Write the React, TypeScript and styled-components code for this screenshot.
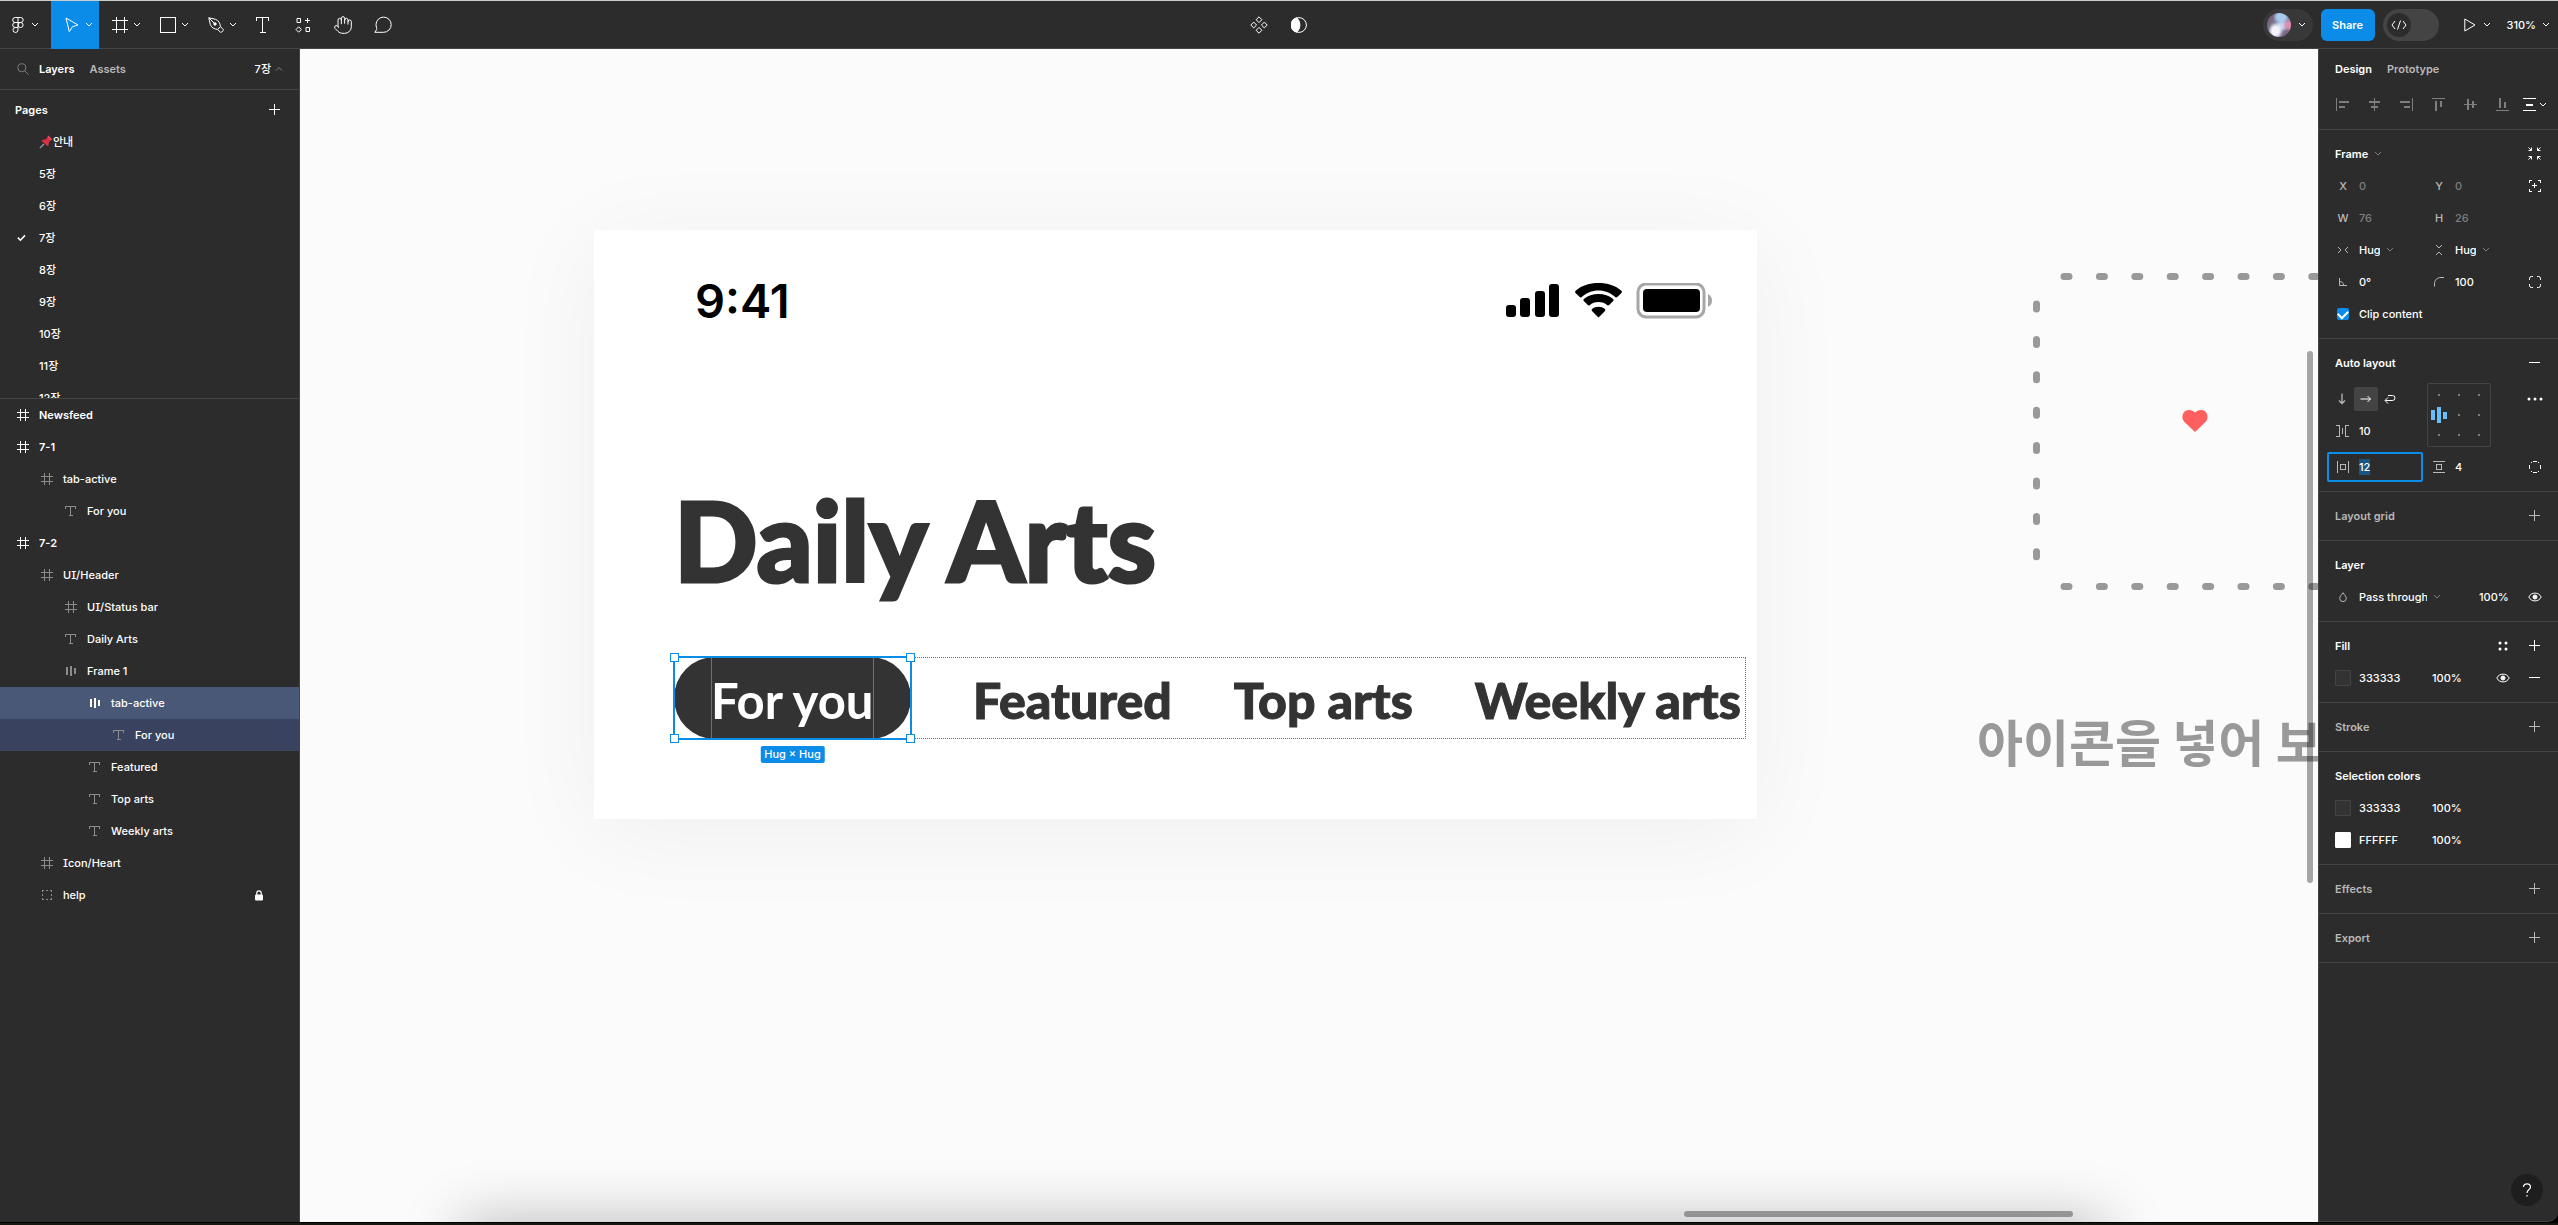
import React, { useEffect, useRef } from "react";
import styled, { createGlobalStyle, css } from "styled-components";
import { Hand } from "lucide-react";

const color = {
  panel: "#2c2c2c",
  line: "#444444",
  blue: "#0c8ce9",
  text: "#ffffff",
  soft: "#b8b8b8",
  faint: "#7e7e7e",
  canvas: "#fbfbfb",
  ink: "#333333",
};

const ui = `Inter, "Noto Sans CJK KR", sans-serif`;

const GlobalStyle = createGlobalStyle`
  * { box-sizing: border-box; }
  body { margin: 0; background: #000; color: ${color.text}; font: 500 11px/16px ${ui}; font-feature-settings: "cv08"; overflow: hidden; }
  button, input, select { font: inherit; font-feature-settings: inherit; color: inherit; background: none; border: 0; padding: 0; margin: 0; outline: none; }
  ul, h1, h2, p { margin: 0; padding: 0; list-style: none; font: inherit; }
  svg { display: block; flex: none; fill: none; stroke: currentColor; }
  ::selection { background: #1a5684; color: #fff; }
`;

/* ---------- icons ---------- */

type IconProps = { w: number; h: number; crisp?: boolean; children: React.ReactNode };
const Icon = ({ w, h, crisp, children }: IconProps) => (
  <svg width={w} height={h} viewBox={`0 0 ${w} ${h}`} shapeRendering={crisp ? "crispEdges" : undefined} aria-hidden>
    {children}
  </svg>
);

const Chevron = ({ up }: { up?: boolean }) => (
  <Icon w={8} h={6}>
    <path d={up ? "M1 4.5L4 1.5L7 4.5" : "M1 1L4 4L7 1"} />
  </Icon>
);
const FigmaMark = () => (
  <Icon w={12} h={16}>
    <path d="M6 .5H3.2a2.5 2.5 0 0 0 0 5H6M6 5.5H3.2a2.5 2.5 0 0 0 0 5H6M6 10.5H3.2A2.5 2.5 0 1 0 6 13V.5H8.7a2.5 2.5 0 0 1 0 5H6" />
    <circle cx="8.6" cy="8" r="2.5" />
  </Icon>
);
const MoveIcon = () => (
  <Icon w={14} h={16}>
    <path d="M1 1L13 8L7.5 9.7L4.3 14.6Z" />
  </Icon>
);
const FrameTool = () => (
  <Icon w={16} h={16} crisp>
    <path d="M4.5 0V16M12.5 0V16M0 3.5H16M0 12.5H16" />
  </Icon>
);
const RectTool = () => (
  <Icon w={16} h={16} crisp>
    <rect x=".5" y=".5" width="15" height="15" />
  </Icon>
);
const PenTool = () => (
  <Icon w={16} h={16}>
    <path d="M.8 .8L7.500 2.300C10.800 3.400 12.300 6.600 12.400 9.700L9.700 12.400C6.600 12.300 3.400 10.800 2.300 7.500ZM.8 .8L6.200 6.200M12.500 9.700L15.300 12.500L15.100 13.700L13.700 15.100L12.500 15.300L9.700 12.500" />
    <circle cx="7" cy="7" r="1.2" fill="currentColor" />
  </Icon>
);
const TextTool = () => (
  <Icon w={14} h={16} crisp>
    <path d="M.5 4V.5H12.5V4M6.5 0V15.5M3.5 15.5H10" />
  </Icon>
);
const ResourcesIcon = () => (
  <Icon w={16} h={16}>
    <path d="M2 1.5H5.5V5.5H2ZM12.5 1V6M10 3.5H15M11 10.5H14.5V14.5H11ZM3.7 9.8L6.4 12.5L3.7 15.2L1 12.5Z" />
  </Icon>
);
const CommentIcon = () => (
  <Icon w={18} h={18}>
    <path d="M.8 16.3H9.6A7.6 7.6 0 1 0 2 8.7C2 10.300 3 12.100 2.600 13.600Z" />
  </Icon>
);
const ComponentsIcon = () => (
  <Icon w={18} h={18}>
    <path d="M9 .8L11.9 3.7L9 6.6L6.1 3.7ZM9 11.4L11.9 14.3L9 17.2L6.1 14.3ZM3.7 6.1L6.6 9L3.7 11.9L.8 9ZM14.3 6.1L17.2 9L14.3 11.9L11.4 9Z" />
  </Icon>
);
const ContrastIcon = () => (
  <Icon w={16} h={16}>
    <circle cx="8" cy="8" r="7.4" />
    <path d="M5.5.8A7.5 7.5 0 0 0 5.5 15.2C10 12 10 4 5.5.8Z" fill="currentColor" />
  </Icon>
);
const CodeIcon = () => (
  <Icon w={16} h={10}>
    <path d="M4 1L1 5L4 9M12 1L15 5L12 9M9.5 .5L6.5 9.5" />
  </Icon>
);
const PlayIcon = () => (
  <Icon w={12} h={14}>
    <path d="M.8 1V13L11 7Z" />
  </Icon>
);
const SearchIcon = () => (
  <Icon w={12} h={12}>
    <circle cx="4.8" cy="4.8" r="4" />
    <path d="M7.8 7.8L11.6 11.6" />
  </Icon>
);
const PlusIcon = () => (
  <Icon w={12} h={12} crisp>
    <path d="M5.5 0V11M0 5.5H11" />
  </Icon>
);
const MinusIcon = () => (
  <Icon w={12} h={12} crisp>
    <path d="M0 5.5H11" />
  </Icon>
);
const CheckIcon = () => (
  <Icon w={10} h={8}>
    <path d="M.8 3.6L3.4 6.2L8 1.4" strokeWidth="1.6" />
  </Icon>
);
const PinIcon = () => (
  <Icon w={14} h={14}>
    <path d="M5 9L.8 13.2" stroke="#8fa3ad" strokeWidth="1.2" />
    <path d="M9.2.6L13.2 4.4L11.8 5.2L9.8 7.6L9.6 10.6L8.6 11.2L2.6 5.8L3.4 4.8L6.4 4.4L8.6 2.2Z" fill="#dd2e44" stroke="none" />
    <path d="M9.2.6L13.2 4.4L12 5L8.6 2Z" fill="#f4505f" stroke="none" />
  </Icon>
);
const glyphs: Record<string, React.ReactNode> = {
  frame: (
    <Icon w={12} h={12} crisp>
      <path d="M3.5 0V12M8.5 0V12M0 3.5H12M0 8.5H12" />
    </Icon>
  ),
  text: (
    <Icon w={12} h={12} crisp>
      <path d="M.5 4V1.5H10.5V4M5.5 1V10.5M3.5 10.5H8" />
    </Icon>
  ),
  auto: (
    <Icon w={12} h={12} crisp>
      <path d="M2 2V10M6 1V11M10 3V9" strokeWidth="2" />
    </Icon>
  ),
  group: (
    <Icon w={12} h={12} crisp>
      <path d="M1.5 3V1.5H3M5 1.5H7M9 1.5H10.5V3M10.5 5V7M10.5 9V10.5H9M7 10.5H5M3 10.5H1.5V9M1.5 7V5" />
    </Icon>
  ),
};
const LockIcon = () => (
  <Icon w={8} h={11}>
    <rect x="0" y="4.5" width="8" height="6" rx="1" fill="currentColor" stroke="none" />
    <path d="M1.8 5V3a2.2 2.2 0 0 1 4.4 0V5" strokeWidth="1.2" />
  </Icon>
);
const EyeIcon = () => (
  <Icon w={14} h={10}>
    <path d="M.8 5C3.2-.2 10.8-.2 13.2 5C10.8 10.2 3.2 10.2.8 5Z" />
    <circle cx="7" cy="5" r="2" fill="currentColor" />
  </Icon>
);
const alignShapes = [
  { edge: "M.5 0V13", bars: "M3 4H13M3 9H9" },
  { edge: "M6.5 0V13", bars: "M1 4H12M3 9H10" },
  { edge: "M12.5 0V13", bars: "M0 4H10M4 9H10" },
  { edge: "M0 .5H13", bars: "M4 3V13M9 3V9" },
  { edge: "M0 6.5H13", bars: "M4 1V12M9 3V10" },
  { edge: "M0 12.5H13", bars: "M4 0V10M9 4V10" },
];
const alignNames = ["left", "horizontal centers", "right", "top", "vertical centers", "bottom"];

/* ---------- shell ---------- */

const Shell = styled.div`
  display: flex;
  flex-direction: column;
  height: 100vh;
  border-top: 1px solid #c9cecd;
  border-bottom: 2px solid #17180f;
  background: #000;
  padding-bottom: 1px;
`;
const Toolbar = styled.header`
  display: grid;
  grid-template-columns: 1fr auto 1fr;
  height: 48px;
  flex: none;
  background: ${color.panel};
  box-shadow: inset 0 -1px ${color.line};
`;
const Group = styled.div<{ $end?: boolean }>`
  display: flex;
  align-items: center;
  justify-content: ${(p) => (p.$end ? "flex-end" : "flex-start")};
`;
const Tool = styled.button<{ $active?: boolean }>`
  width: 40px;
  height: 48px;
  display: flex;
  align-items: center;
  justify-content: center;
  background: ${(p) => (p.$active ? color.blue : "transparent")};
`;
const MenuTool = styled(Tool)<{ $wide?: boolean }>`
  width: ${(p) => (p.$wide ? 51 : 48)}px;
  justify-content: flex-start;
  gap: 5px;
  padding-left: ${(p) => (p.$wide ? 10 : 13)}px;
`;
const ToolMark = styled.span`
  display: grid;
  place-items: center;
  width: 16px;
`;
const Account = styled.button`
  display: flex;
  align-items: center;
  gap: 7px;
  width: 50px;
  height: 32px;
  padding: 0 4px;
  border-radius: 16px;
  background: #383838;
`;
const Avatar = styled.span`
  width: 24px;
  height: 24px;
  border-radius: 50%;
  background:
    radial-gradient(ellipse at 36% 74%, #f4f3fa 0 16%, transparent 34%),
    radial-gradient(circle at 58% 16%, #a9c9ee 0 16%, transparent 32%),
    radial-gradient(circle at 92% 50%, #dd8fae 0 10%, transparent 26%),
    radial-gradient(circle at 62% 52%, #c9d3ec 0 12%, transparent 34%),
    linear-gradient(120deg, #75657a 20%, #8ea0c4 52%, #7d6480 80%);
`;
const Share = styled.button`
  width: 54px;
  height: 32px;
  margin: 0 8px;
  border-radius: 6px;
  background: ${color.blue};
  font-weight: 600;
`;
const DevToggle = styled.button`
  display: flex;
  align-items: center;
  width: 56px;
  height: 32px;
  padding: 0 4px;
  border-radius: 16px;
  background: ${color.line};
`;
const Knob = styled.span`
  display: grid;
  place-items: center;
  width: 24px;
  height: 24px;
  border-radius: 50%;
  background: ${color.panel};
`;
const Menu = styled.button`
  display: flex;
  align-items: center;
  gap: 7px;
  height: 48px;
`;
const Present = styled(Menu)`
  margin: 0 16px 0 25px;
`;
const Zoom = styled(Menu)`
  gap: 6px;
  margin-right: 8px;
`;
const Body = styled.div`
  display: flex;
  flex: 1;
  min-height: 0;
`;

/* ---------- left panel ---------- */

const Left = styled.aside`
  width: 300px;
  flex: none;
  background: ${color.panel};
  border-right: 1px solid ${color.line};
`;
const PanelHead = styled.div`
  display: flex;
  align-items: center;
  height: 41px;
  padding: 0 16px 0 17px;
  border-bottom: 1px solid ${color.line};
`;
const SearchButton = styled.button`
  width: 22px;
  color: ${color.faint};
`;
const Tab = styled.button<{ $on?: boolean }>`
  margin-right: 15px;
  font-weight: 600;
  color: ${(p) => (p.$on ? color.text : color.soft)};
`;
const PageMenu = styled.button`
  display: flex;
  align-items: center;
  gap: 4px;
  margin-left: auto;
  svg { color: ${color.faint}; }
`;
const Pages = styled.section`
  height: 309px;
  overflow: hidden;
  border-bottom: 1px solid ${color.line};
`;
const PagesHead = styled.div`
  display: flex;
  align-items: center;
  justify-content: space-between;
  height: 36px;
  padding: 4px 18px 0 15px;
  font-weight: 600;
`;
const PageRow = styled.li`
  display: flex;
  align-items: center;
  height: 32px;
`;
const CheckCell = styled.span`
  width: 39px;
  padding-left: 17px;
`;
const LayerRow = styled.li<{ $depth: number; $strong?: boolean; $tone?: "selected" | "child" }>`
  display: flex;
  align-items: center;
  gap: 10px;
  height: 32px;
  padding-right: 36px;
  padding-left: ${(p) => 17 + p.$depth * 24}px;
  font-weight: ${(p) => (p.$strong ? 600 : 500)};
  ${(p) => p.$tone === "selected" && css`background: #4a5878;`}
  ${(p) => p.$tone === "child" && css`background: #394360;`}
`;
const Glyph = styled.span<{ $bright?: boolean }>`
  color: ${(p) => (p.$bright ? color.text : "#8c8c8c")};
`;
const RowEnd = styled.span`
  margin-left: auto;
`;

/* ---------- canvas ---------- */

const Canvas = styled.main`
  position: relative;
  flex: 1;
  min-width: 0;
  overflow: hidden;
  background: ${color.canvas};
`;
const Artboard = styled.article`
  position: absolute;
  left: 294px;
  top: 181px;
  width: 1163px;
  padding: 46px 0 80px 80px;
  background: #fff;
  color: ${color.ink};
  box-shadow: 0 12px 93px rgba(0, 0, 0, 0.05);
  font-family: Lato, sans-serif;
`;
const StatusBar = styled.div`
  display: flex;
  align-items: center;
  justify-content: space-between;
  height: 50px;
  padding: 0 43px 0 21px;
  color: #000;
`;
const Clock = styled.time`
  font: 600 47px/50px Inter, sans-serif;
`;
const Title = styled.h1`
  margin-top: 148px;
  font-size: 110px;
  line-height: 130px;
  font-weight: 900;
  -webkit-text-stroke: 3px ${color.ink};
`;
const TabStrip = styled.div`
  display: flex;
  align-items: center;
  width: 1072px;
  height: 82px;
  margin-top: 53px;
  outline: 1px dotted ${color.blue};
  outline-offset: -1px;
`;
const CanvasTab = styled.p`
  margin-left: 62px;
  padding-top: 3px;
  font-size: 50px;
  line-height: 58px;
  font-weight: 900;
  -webkit-text-stroke: 1px ${color.ink};
  white-space: nowrap;
`;
const Selection = styled.div`
  position: relative;
  width: 237px;
  height: 82px;
  outline: 2px solid ${color.blue};
  outline-offset: -1px;
`;
const Pill = styled.p`
  height: 82px;
  padding: 14px 37px 10px;
  border-radius: 41px;
  background: ${color.ink};
  color: #fff;
  font-size: 49px;
  line-height: 58px;
  font-weight: 700;
  white-space: nowrap;
`;
const TextBounds = styled.span`
  position: absolute;
  inset: 0 37px;
  border: solid ${color.blue};
  border-width: 0 1px;
`;
const Handle = styled.span<{ $x: "left" | "right"; $y: "top" | "bottom" }>`
  position: absolute;
  ${(p) => p.$x}: -4px;
  ${(p) => p.$y}: -4px;
  width: 9px;
  height: 9px;
  border: 1px solid ${color.blue};
  background: #fff;
`;
const SizeTag = styled.span`
  position: absolute;
  top: 89px;
  left: 50%;
  transform: translateX(-50%);
  padding: 0 4px;
  border-radius: 2px;
  background: ${color.blue};
  color: #fff;
  font: 500 11px/17px ${ui};
  white-space: nowrap;
`;
const HelpFrame = styled.div`
  position: absolute;
  left: 1733px;
  top: 224px;
`;
const HelpText = styled.p`
  position: absolute;
  left: 1677px;
  top: 654px;
  color: #999;
  font: 700 50px/74px "Noto Sans CJK KR", sans-serif;
  white-space: nowrap;
`;
const ScrollThumb = styled.div<{ $vertical?: boolean }>`
  position: absolute;
  border-radius: 3px;
  background: rgba(0, 0, 0, 0.34);
  ${(p) =>
    p.$vertical
      ? css`right: 5px; top: 302px; width: 6px; height: 532px;`
      : css`right: 245px; bottom: 5px; width: 389px; height: 6px;`}
`;
const DockShadow = styled.div`
  position: absolute;
  left: 162px;
  right: 212px;
  top: 100%;
  height: 60px;
  box-shadow: 0 0 60px rgba(0, 0, 0, 0.28);
`;

/* ---------- right panel ---------- */

const Right = styled.aside`
  position: relative;
  width: 240px;
  flex: none;
  background: ${color.panel};
  border-left: 1px solid ${color.line};
  border-bottom: 1px solid ${color.line};
  border-bottom-right-radius: 10px;
`;
const ModeTabs = styled.nav`
  display: flex;
  align-items: center;
  height: 40px;
  padding-left: 16px;
`;
const AlignBar = styled.div`
  display: flex;
  height: 41px;
  padding: 0 7px 8px 8px;
  border-bottom: 1px solid ${color.line};
  color: ${color.faint};
`;
const Square = styled.button<{ $soft?: boolean; $bright?: boolean }>`
  display: flex;
  align-items: center;
  justify-content: center;
  gap: 2px;
  width: 32px;
  height: 32px;
  flex: none;
  color: ${(p) => (p.$soft ? color.soft : p.$bright ? color.text : "inherit")};
`;
const Section = styled.section`
  padding: 8px 7px 8px 8px;
  border-bottom: 1px solid ${color.line};
`;
const SectionHead = styled.div<{ $soft?: boolean }>`
  display: flex;
  align-items: center;
  height: 32px;
  padding-left: 8px;
  color: ${(p) => (p.$soft ? color.soft : color.text)};
`;
const SectionTitle = styled.h2`
  display: flex;
  align-items: center;
  gap: 6px;
  margin-right: auto;
  font-weight: 600;
  svg { color: ${color.faint}; }
`;
const Grid = styled.div`
  display: grid;
  grid-template-columns: 96px 96px 32px;
  align-items: center;
`;
const Row = styled.div`
  display: flex;
  align-items: center;
  height: 32px;
`;
const Spacer = styled.span<{ $w?: number }>`
  flex: ${(p) => (p.$w ? "none" : 1)};
  width: ${(p) => p.$w || 0}px;
`;
const Field = styled.label<{ $muted?: boolean }>`
  display: grid;
  grid-template-columns: 32px 1fr;
  align-items: center;
  height: 32px;
  color: ${(p) => (p.$muted ? color.faint : color.text)};
`;
const FieldMark = styled.span`
  display: grid;
  place-items: center;
  color: ${color.soft};
`;
const FocusField = styled(Field)`
  height: 30px;
  border-radius: 2px;
  box-shadow: inset 0 0 0 2px ${color.blue};
`;
const Value = styled.input<{ $w?: number }>`
  width: ${(p) => (p.$w ? p.$w + "px" : "100%")};
  min-width: 0;
  height: 16px;
`;
const Pick = styled.span`
  display: flex;
  align-items: center;
  gap: 6px;
  svg { color: ${color.faint}; }
`;
const Select = styled.select<{ $w: number }>`
  width: ${(p) => p.$w}px;
  height: 16px;
  appearance: none;
`;
const ClipLabel = styled.label`
  display: flex;
  align-items: center;
  height: 32px;
  padding-left: 10px;
  gap: 10px;
`;
const Tick = styled.input`
  appearance: none;
  display: grid;
  place-items: center;
  width: 12px;
  height: 12px;
  border-radius: 2px;
  background: ${color.blue};
  &::after {
    content: "";
    width: 8px;
    height: 5px;
    margin-bottom: 2px;
    border: solid #fff;
    border-width: 0 0 2px 2px;
    transform: rotate(-45deg);
  }
`;
const LayoutArea = styled.div`
  display: grid;
  grid-template-columns: 100px 92px 32px;
  align-items: start;
  padding: 4px 0;
`;
const Directions = styled.div`
  display: flex;
  align-items: center;
  height: 32px;
  padding-left: 3px;
`;
const Direction = styled.button<{ $on?: boolean; $soft?: boolean }>`
  display: grid;
  place-items: center;
  width: 24px;
  height: 24px;
  border-radius: 2px;
  background: ${(p) => (p.$on ? color.line : "transparent")};
  color: ${(p) => (p.$soft ? color.soft : color.text)};
`;
const AlignPad = styled.div`
  width: 64px;
  height: 64px;
  border: 1px solid ${color.line};
  border-radius: 2px;
`;
const Swatch = styled.button<{ $fill: string }>`
  width: 16px;
  height: 16px;
  margin: 0 8px;
  border: 1px solid ${(p) => (p.$fill === "#333333" ? "#444" : p.$fill)};
  background: ${(p) => p.$fill};
  border-radius: 1px;
`;
const Help = styled.button`
  position: absolute;
  right: 15px;
  bottom: 15px;
  width: 32px;
  height: 32px;
  border-radius: 50%;
  background: #1e1e1e;
  display: grid;
  place-items: center;
`;

const pages = ["안내", "5장", "6장", "7장", "8장", "9장", "10장", "11장", "12장"];

type Layer = { name: string; kind: string; depth: number; tone?: "selected" | "child"; locked?: boolean };
const layers: Layer[] = [
  { name: "Newsfeed", kind: "frame", depth: 0 },
  { name: "7-1", kind: "frame", depth: 0 },
  { name: "tab-active", kind: "frame", depth: 1 },
  { name: "For you", kind: "text", depth: 2 },
  { name: "7-2", kind: "frame", depth: 0 },
  { name: "UI/Header", kind: "frame", depth: 1 },
  { name: "UI/Status bar", kind: "frame", depth: 2 },
  { name: "Daily Arts", kind: "text", depth: 2 },
  { name: "Frame 1", kind: "auto", depth: 2 },
  { name: "tab-active", kind: "auto", depth: 3, tone: "selected" },
  { name: "For you", kind: "text", depth: 4, tone: "child" },
  { name: "Featured", kind: "text", depth: 3 },
  { name: "Top arts", kind: "text", depth: 3 },
  { name: "Weekly arts", kind: "text", depth: 3 },
  { name: "Icon/Heart", kind: "frame", depth: 1 },
  { name: "help", kind: "group", depth: 1, locked: true },
];

const menuTools = [
  { name: "Main menu", mark: <FigmaMark />, wide: true },
  { name: "Move", mark: <MoveIcon />, active: true },
  { name: "Frame", mark: <FrameTool /> },
  { name: "Rectangle", mark: <RectTool /> },
  { name: "Pen", mark: <PenTool /> },
];

const TopBar = () => (
  <Toolbar>
    <Group>
      {menuTools.map((tool) => (
        <MenuTool key={tool.name} $wide={tool.wide} $active={tool.active} aria-label={tool.name}>
          <ToolMark>{tool.mark}</ToolMark>
          <Chevron />
        </MenuTool>
      ))}
      <Tool aria-label="Text"><TextTool /></Tool>
      <Tool aria-label="Resources"><ResourcesIcon /></Tool>
      <Tool aria-label="Hand tool"><Hand size={20} strokeWidth={1.2} /></Tool>
      <Tool aria-label="Comment"><CommentIcon /></Tool>
    </Group>
    <Group>
      <Tool aria-label="Create component"><ComponentsIcon /></Tool>
      <Tool aria-label="Use as mask"><ContrastIcon /></Tool>
    </Group>
    <Group $end>
      <Account aria-label="Account"><Avatar /><Chevron /></Account>
      <Share>Share</Share>
      <DevToggle role="switch" aria-checked="false" aria-label="Dev mode"><Knob><CodeIcon /></Knob></DevToggle>
      <Present aria-label="Present"><PlayIcon /><Chevron /></Present>
      <Zoom>310%<Chevron /></Zoom>
    </Group>
  </Toolbar>
);

const LeftPanel = () => (
  <Left>
    <PanelHead>
      <SearchButton aria-label="Search"><SearchIcon /></SearchButton>
      <Tab $on>Layers</Tab>
      <Tab>Assets</Tab>
      <PageMenu>7장<Chevron up /></PageMenu>
    </PanelHead>
    <Pages>
      <PagesHead>
        <h2>Pages</h2>
        <button aria-label="Add page"><PlusIcon /></button>
      </PagesHead>
      <ul>
        {pages.map((page, i) => (
          <PageRow key={page}>
            <CheckCell>{page === "7장" && <CheckIcon />}</CheckCell>
            {i === 0 && <PinIcon />}
            {page}
          </PageRow>
        ))}
      </ul>
    </Pages>
    <ul>
      {layers.map((layer, i) => (
        <LayerRow key={i} $depth={layer.depth} $strong={layer.depth === 0} $tone={layer.tone}>
          <Glyph $bright={layer.depth === 0 || layer.tone === "selected"}>{glyphs[layer.kind]}</Glyph>
          {layer.name}
          {layer.locked && <RowEnd><LockIcon /></RowEnd>}
        </LayerRow>
      ))}
    </ul>
  </Left>
);

const StatusIcons = () => (
  <Icon w={208} h={36}>
    <g fill="#000" stroke="none">
      <rect x="0" y="22" width="10" height="12" rx="3" />
      <rect x="14" y="15" width="10" height="19" rx="3" />
      <rect x="29" y="8" width="10" height="26" rx="3" />
      <rect x="43" y="1" width="10" height="33" rx="3" />
      <path d="M92.500 7.500C99 7.500 105 10 109.500 14.200Q110.400 15 111.300 14.100L115.500 9.900Q116.500 8.800 115.400 7.800C109.500 2.500 101.500 0 92.500 0S75.500 2.500 69.600 7.800Q68.500 8.800 69.500 9.900L73.700 14.100Q74.600 15 75.500 14.200C80 10 86 7.500 92.500 7.500Z" />
      <path d="M92.500 19C96 19 99 20.200 101.300 22.200Q102.300 23 103.200 22.100L107.200 18Q108.200 16.900 107.100 15.900C103.200 12.500 98 11 92.500 11S81.800 12.500 77.900 15.900Q76.800 16.900 77.800 18L81.800 22.100Q82.700 23 83.700 22.200C86 20.200 89 19 92.500 19Z" />
      <path d="M92.500 34.500L99 28Q100 26.800 98.900 25.900C95.500 23 89.500 23 86.100 25.900Q85 26.800 86 28Z" />
      <rect x="137" y="6" width="57" height="23" rx="4" />
      <path d="M202 11V24Q206 22 206 17.500T202 11Z" fill="#a6a6a6" />
    </g>
    <rect x="132" y="1" width="66" height="33" rx="8" stroke="#a6a6a6" strokeWidth="3" />
  </Icon>
);

const Stage = () => (
  <Canvas>
    <Artboard>
      <StatusBar>
        <Clock>9:41</Clock>
        <StatusIcons />
      </StatusBar>
      <Title>Daily Arts</Title>
      <TabStrip>
        <Selection>
          <Pill>For you</Pill>
          <TextBounds />
          <Handle $x="left" $y="top" />
          <Handle $x="right" $y="top" />
          <Handle $x="left" $y="bottom" />
          <Handle $x="right" $y="bottom" />
          <SizeTag>Hug × Hug</SizeTag>
        </Selection>
        <CanvasTab>Featured</CanvasTab>
        <CanvasTab>Top arts</CanvasTab>
        <CanvasTab>Weekly arts</CanvasTab>
      </TabStrip>
    </Artboard>
    <HelpFrame>
      <Icon w={320} h={320}>
        <g stroke="#999" strokeWidth="7" strokeLinecap="round" strokeDasharray="5 30.4">
          <path d="M31 3.500H320M31 313.500H320M3.500 31V300" />
        </g>
        <path d="M162 159L151.500 149C147.500 145 149.500 137 156 137C159 137 161 138.500 162 139.500C163 138.500 165 137 168 137C174.500 137 176.500 145 172.500 149Z" fill="#ff5f5f" stroke="none" />
      </Icon>
    </HelpFrame>
    <HelpText>아이콘을 넣어 보</HelpText>
    <DockShadow />
    <ScrollThumb $vertical />
    <ScrollThumb />
  </Canvas>
);

type SelectFieldProps = { name: string; value: string; width: number };
const SelectField = ({ name, value, width }: SelectFieldProps) => (
  <Pick>
    <Select $w={width} aria-label={name}><option>{value}</option></Select>
    <Chevron />
  </Pick>
);

const EmptySection = ({ title }: { title: string }) => (
  <Section>
    <SectionHead $soft>
      <SectionTitle>{title}</SectionTitle>
      <Square $soft aria-label={`Add ${title}`}><PlusIcon /></Square>
    </SectionHead>
  </Section>
);

const ColorRow = ({ hex, children }: { hex: string; children?: React.ReactNode }) => (
  <Row>
    <Swatch $fill={`#${hex}`} aria-label={`Color ${hex}`} />
    <Value $w={73} defaultValue={hex} aria-label="Hex" />
    <Value $w={40} defaultValue="100%" aria-label="Opacity" />
    {children}
  </Row>
);

const RightPanel = () => {
  const padding = useRef<HTMLInputElement>(null);
  useEffect(() => {
    padding.current?.focus();
    padding.current?.select();
  }, []);
  return (
    <Right>
      <ModeTabs>
        <Tab $on>Design</Tab>
        <Tab>Prototype</Tab>
      </ModeTabs>
      <AlignBar>
        {alignShapes.map((shape, i) => (
          <Square key={alignNames[i]} aria-label={`Align ${alignNames[i]}`}>
            <Icon w={14} h={14} crisp>
              <path d={shape.edge} />
              <path d={shape.bars} strokeWidth="2" />
            </Icon>
          </Square>
        ))}
        <Square $bright aria-label="Distribute">
          <Icon w={14} h={14} crisp>
            <path d="M0 .5H13M0 12.5H13" />
            <path d="M3 7H10" strokeWidth="2" />
          </Icon>
          <Chevron />
        </Square>
      </AlignBar>

      <Section>
        <SectionHead>
          <SectionTitle>Frame<Chevron /></SectionTitle>
          <Square aria-label="Resize to fit">
            <Icon w={14} h={14}>
              <path d="M.5 .5L3.500 3.500M.5 3.500H3.500V.5M12.500 .5L9.500 3.500M12.500 3.500H9.500V.5M.5 12.500L3.500 9.500M.5 9.500H3.500V12.500M12.500 12.500L9.500 9.500M12.500 9.500H9.500V12.500" />
            </Icon>
          </Square>
        </SectionHead>
        <Grid>
          <Field $muted><FieldMark>X</FieldMark><Value defaultValue="0" /></Field>
          <Field $muted><FieldMark>Y</FieldMark><Value defaultValue="0" /></Field>
          <Square aria-label="Absolute position">
            <Icon w={12} h={12} crisp>
              <path d="M.5 3V.5H3M9 .5H11.500V3M11.500 9V11.500H9M3 11.500H.5V9M5.500 3V8M3 5.500H8" />
            </Icon>
          </Square>
          <Field $muted><FieldMark>W</FieldMark><Value defaultValue="76" /></Field>
          <Field $muted><FieldMark>H</FieldMark><Value defaultValue="26" /></Field>
          <span />
          <Field as="div">
            <FieldMark><Icon w={12} h={8}><path d="M1 1L4 4L1 7M11 1L8 4L11 7" /></Icon></FieldMark>
            <SelectField name="Horizontal resizing" value="Hug" width={21} />
          </Field>
          <Field as="div">
            <FieldMark><Icon w={8} h={12}><path d="M1 1L4 4L7 1M1 11L4 8L7 11" /></Icon></FieldMark>
            <SelectField name="Vertical resizing" value="Hug" width={21} />
          </Field>
          <span />
          <Field>
            <FieldMark><Icon w={8} h={8}><path d="M.5 0V7.500H8M.5 3.500C3 3.500 4.500 5 4.500 7.500" /></Icon></FieldMark>
            <Value defaultValue="0°" aria-label="Rotation" />
          </Field>
          <Field>
            <FieldMark><Icon w={10} h={10}><path d="M.5 9.500V7C.5 3 3 .5 7 .5H10" /></Icon></FieldMark>
            <Value defaultValue="100" aria-label="Corner radius" />
          </Field>
          <Square aria-label="Independent corners">
            <Icon w={12} h={12}>
              <path d="M.5 4V2.500Q.5 .5 2.500 .5H4M8 .5H9.500Q11.500 .5 11.500 2.500V4M11.500 8V9.500Q11.500 11.500 9.500 11.500H8M4 11.500H2.500Q.5 11.500 .5 9.500V8" />
            </Icon>
          </Square>
        </Grid>
        <ClipLabel><Tick type="checkbox" defaultChecked />Clip content</ClipLabel>
      </Section>

      <Section>
        <SectionHead>
          <SectionTitle>Auto layout</SectionTitle>
          <Square aria-label="Remove auto layout"><MinusIcon /></Square>
        </SectionHead>
        <LayoutArea>
          <div>
            <Directions>
              <Direction $soft aria-label="Vertical"><Icon w={8} h={12}><path d="M4 .5V10.500M1 7.500L4 10.500L7 7.500" strokeWidth="1.300" /></Icon></Direction>
              <Direction $on aria-label="Horizontal"><Icon w={12} h={8}><path d="M.5 4H10.500M7.500 1L10.500 4L7.500 7" /></Icon></Direction>
              <Direction aria-label="Wrap"><Icon w={12} h={10}><path d="M4 1.500H8.500A2.500 2.500 0 0 1 8.500 6.500H1.500M4 3.500L1 6.500L4 9.500" /></Icon></Direction>
            </Directions>
            <Field>
              <FieldMark><Icon w={14} h={12} crisp><path d="M0 .5H3.500V11.500H0M13 .5H9.500V11.500H13M6.500 3V9" /></Icon></FieldMark>
              <Value defaultValue="10" aria-label="Gap" />
            </Field>
          </div>
          <AlignPad>
            <Icon w={62} h={62} crisp>
              <path d="M10 11H12M30 11H32M50 11H52M30 31H32M50 31H52M10 51H12M30 51H32M50 51H52" stroke="#7e7e7e" strokeWidth="2" />
              <path d="M5 26V36M11 23V39M17 28V35" stroke="#6bbdf9" strokeWidth="4" />
            </Icon>
          </AlignPad>
          <Square aria-label="Advanced layout">
            <Icon w={16} h={4}><g fill="currentColor" stroke="none"><circle cx="2" cy="2" r="1.500" /><circle cx="8" cy="2" r="1.500" /><circle cx="14" cy="2" r="1.500" /></g></Icon>
          </Square>
        </LayoutArea>
        <Grid>
          <FocusField>
            <FieldMark><Icon w={12} h={12} crisp><path d="M.5 0V12M11.500 0V12M3.500 3.500H8.500V8.500H3.500Z" /></Icon></FieldMark>
            <Value ref={padding} defaultValue="12" aria-label="Horizontal padding" />
          </FocusField>
          <Field>
            <FieldMark><Icon w={12} h={12} crisp><path d="M0 .5H12M0 11.500H12M3.500 3.500H8.500V8.500H3.500Z" /></Icon></FieldMark>
            <Value defaultValue="4" aria-label="Vertical padding" />
          </Field>
          <Square aria-label="Individual padding">
            <Icon w={12} h={12} crisp><path d="M4 .5H8M4 11.500H8M.5 4V8M11.500 4V8M2 1.500H3M9 1.500H10M2 10.500H3M9 10.500H10" /></Icon>
          </Square>
        </Grid>
      </Section>

      <EmptySection title="Layout grid" />

      <Section>
        <SectionHead><SectionTitle>Layer</SectionTitle></SectionHead>
        <Row>
          <Spacer $w={12} />
          <FieldMark><Icon w={8} h={10}><path d="M4 .7C5.500 3 7.300 4.500 7.300 6.300A3.300 3.300 0 0 1 .7 6.300C.7 4.500 2.500 3 4 .7Z" /></Icon></FieldMark>
          <Spacer $w={12} />
          <SelectField name="Blend mode" value="Pass through" width={68} />
          <Spacer />
          <Value $w={40} defaultValue="100%" aria-label="Layer opacity" />
          <Square aria-label="Toggle layer"><EyeIcon /></Square>
        </Row>
      </Section>

      <Section>
        <SectionHead>
          <SectionTitle>Fill</SectionTitle>
          <Square aria-label="Styles">
            <Icon w={10} h={10}><g fill="currentColor" stroke="none"><circle cx="2" cy="2" r="1.500" /><circle cx="8" cy="2" r="1.500" /><circle cx="2" cy="8" r="1.500" /><circle cx="8" cy="8" r="1.500" /></g></Icon>
          </Square>
          <Square aria-label="Add fill"><PlusIcon /></Square>
        </SectionHead>
        <ColorRow hex="333333">
          <Spacer />
          <Square aria-label="Toggle fill"><EyeIcon /></Square>
          <Square aria-label="Remove fill"><MinusIcon /></Square>
        </ColorRow>
      </Section>

      <EmptySection title="Stroke" />

      <Section>
        <SectionHead><SectionTitle>Selection colors</SectionTitle></SectionHead>
        <ColorRow hex="333333" />
        <ColorRow hex="FFFFFF" />
      </Section>

      <EmptySection title="Effects" />
      <EmptySection title="Export" />

      <Help aria-label="Help">
        <Icon w={10} h={14}>
          <path d="M1.500 4C1.500-.3 8.500-.3 8.500 4C8.500 6.500 5 6.500 5 10M5 12V13.500" strokeWidth="1.200" />
        </Icon>
      </Help>
    </Right>
  );
};

export default function App() {
  return (
    <Shell>
      <GlobalStyle />
      <TopBar />
      <Body>
        <LeftPanel />
        <Stage />
        <RightPanel />
      </Body>
    </Shell>
  );
}
